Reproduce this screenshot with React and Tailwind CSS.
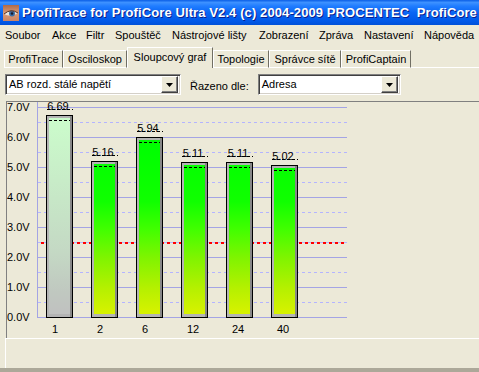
import React from 'react';

const MENU = [
  ['Soubor', 47],
  ['Akce', 34],
  ['Filtr', 29],
  ['Spouštěč', 57],
  ['Nástrojové lišty', 87],
  ['Zobrazení', 60],
  ['Zpráva', 45],
  ['Nastavení', 60],
  ['Nápověda', 50],
];

const TABS = [
  ['ProfiTrace', 59],
  ['Osciloskop', 64],
  ['Sloupcový graf', 86],
  ['Topologie', 56],
  ['Správce sítě', 72],
  ['ProfiCaptain', 70],
];

const BARS = [
  { label: '1', v: 6.69, gray: true },
  { label: '2', v: 5.16 },
  { label: '6', v: 5.94 },
  { label: '12', v: 5.11 },
  { label: '24', v: 5.11 },
  { label: '40', v: 5.02 },
];

const FONT = '"Liberation Sans", Arial, sans-serif';

function EyeIcon() {
  return (
    <svg width="16" height="16" viewBox="0 0 16 16">
      <defs>
        <linearGradient id="skin" x1="0" y1="0" x2="0" y2="1">
          <stop offset="0" stopColor="#b06a48" />
          <stop offset="0.5" stopColor="#d99a78" />
          <stop offset="1" stopColor="#c98466" />
        </linearGradient>
      </defs>
      <rect x="0" y="0" width="16" height="16" fill="url(#skin)" />
      <path d="M1 9 Q8 3 15 8 Q8 13 1 9 Z" fill="#e8e4e0" />
      <circle cx="9" cy="8.5" r="3" fill="#3a6ea8" />
      <circle cx="9" cy="8.5" r="1.3" fill="#1a1a2a" />
      <path d="M1 9 Q8 3 15 8" fill="none" stroke="#5a3020" strokeWidth="1" />
    </svg>
  );
}

function DropButton() {
  return (
    <div className="w-[17px] h-[17px] bg-[#ece9d8] border border-t-white border-l-white border-b-[#404040] border-r-[#404040] shadow-[inset_-1px_-1px_0_#808080] flex items-center justify-center">
      <svg width="7" height="4" viewBox="0 0 7 4">
        <path d="M0 0 H7 L3.5 4 Z" fill="#000" />
      </svg>
    </div>
  );
}

function Combo({ width, text }) {
  return (
    <div
      className="h-[21px] bg-white border border-t-[#808080] border-l-[#808080] border-b-white border-r-white shadow-[inset_1px_1px_0_#404040,inset_-1px_-1px_0_#d4d0c8] flex items-center justify-between pl-[3px] pr-[2px]"
      style={{ width }}
    >
      <span className="text-[11px] text-black leading-none">{text}</span>
      <DropButton />
    </div>
  );
}

function Chart() {
  const yFor = (v) => 317 - v * 30;
  const solid = [0, 1, 2, 3, 4, 5, 6, 7];
  const dashed = [0.5, 1.5, 2.5, 3.5, 4.5, 5.5, 6.5];
  return (
    <svg width="472" height="236" viewBox="7 102 472 236" style={{ fontFamily: FONT }}>
      <defs>
        <linearGradient id="green" gradientUnits="userSpaceOnUse" x1="0" y1="107" x2="0" y2="317">
          <stop offset="0" stopColor="#00f000" />
          <stop offset="0.2" stopColor="#00ff00" />
          <stop offset="0.45" stopColor="#10ff00" />
          <stop offset="0.58" stopColor="#40ff00" />
          <stop offset="0.72" stopColor="#80f400" />
          <stop offset="0.86" stopColor="#b4f000" />
          <stop offset="1" stopColor="#dcf200" />
        </linearGradient>
        <linearGradient id="grayg" gradientUnits="userSpaceOnUse" x1="0" y1="107" x2="0" y2="317">
          <stop offset="0" stopColor="#ccffcc" />
          <stop offset="0.35" stopColor="#c8ecc8" />
          <stop offset="0.7" stopColor="#c4d8c4" />
          <stop offset="0.88" stopColor="#c0c8c0" />
          <stop offset="1" stopColor="#c0c0c0" />
        </linearGradient>
      </defs>

      {solid.map((v) => (
        <g key={v}>
          <line x1="37" x2="347" y1={yFor(v) + 0.5} y2={yFor(v) + 0.5} stroke="#a4a4e4" strokeWidth="1" />
          <text x="7" y={yFor(v) + 4} fontSize="11" fill="#000">
            {v.toFixed(1)}V
          </text>
        </g>
      ))}
      {dashed.map((v) => (
        <line
          key={v}
          x1="38"
          x2="347"
          y1={yFor(v) + 0.5}
          y2={yFor(v) + 0.5}
          stroke="#b4b4ff"
          strokeWidth="1"
          strokeDasharray="3 3"
        />
      ))}
      <line x1="37.5" x2="37.5" y1="102" y2="317.5" stroke="#a4a4e4" strokeWidth="1" />
      <line x1="41" x2="345" y1="243" y2="243" stroke="#ff0000" strokeWidth="2" strokeDasharray="3 3" />

      {BARS.map((b, i) => {
        const x0 = 46 + 45 * i;
        const top = Math.round(315.5 - b.v * 30);
        return (
          <g key={b.label}>
            <rect x={x0} y={top} width="27" height={318 - top} fill="#000" />
            <rect x={x0 + 1} y={top + 1} width="25" height={316 - top} fill="#b4b4b4" />
            <rect x={x0 + 24} y={top + 1} width="2" height={316 - top} fill="#888888" />
            <rect x={x0 + 3} y={top + 3} width="21" height={311 - top} fill={b.gray ? 'url(#grayg)' : 'url(#green)'} />
            <line
              x1={x0 + 3}
              x2={x0 + 24}
              y1={top + 5.5}
              y2={top + 5.5}
              stroke="#000"
              strokeWidth="1"
              strokeDasharray="3 2"
            />
            <line
              x1={x0 + 1}
              x2={x0 + 27}
              y1={top - 5.5}
              y2={top - 5.5}
              stroke="#000"
              strokeWidth="1"
              strokeDasharray="3 2"
            />
            <text x={x0 + 12} y={top - 5} fontSize="11" textAnchor="middle" fill="#000">
              {b.v.toFixed(2)}
            </text>
            <text x={x0 + 6} y="333" fontSize="11" fill="#000">
              {b.label}
            </text>
          </g>
        );
      })}
    </svg>
  );
}

export default function App() {
  return (
    <div className="w-[479px] h-[372px] overflow-hidden bg-[#ece9d8] flex flex-col font-['Liberation_Sans',Arial,sans-serif] text-black">
      {/* title bar */}
      <div className="h-[25px] shrink-0 flex items-center pl-[3px] bg-[linear-gradient(to_bottom,#0a5ee6_0%,#3d91ff_10%,#1f7cff_25%,#0a66f4_50%,#0058e8_85%,#0050d8_100%)]">
        <EyeIcon />
        <span className="ml-[3px] text-white font-bold text-[13px] whitespace-pre tracking-[0.1px] [text-shadow:1px_1px_0_#0a1e8c]">
          ProfiTrace for ProfiCore Ultra V2.4 (c) 2004-2009 PROCENTEC  ProfiCore
        </span>
      </div>

      {/* menu */}
      <div className="h-[21px] shrink-0 flex items-center pl-[5px] text-[11px]">
        {MENU.map(([name, w]) => (
          <span key={name} style={{ width: w }} className="shrink-0 whitespace-nowrap">
            {name}
          </span>
        ))}
      </div>

      {/* tabs */}
      <div className="h-[22px] shrink-0 flex items-end pl-[4px] text-[11px]">
        {TABS.map(([name, w], i) =>
          i === 2 ? (
            <div
              key={name}
              style={{ width: w }}
              className="h-[21px] shrink-0 flex items-center justify-center pb-[2px] border-t border-l border-white border-r border-r-[#716f64] bg-[#ece9d8]"
            >
              {name}
            </div>
          ) : (
            <div
              key={name}
              style={{ width: w }}
              className="h-[18px] shrink-0 flex items-center justify-center border-t border-l border-b border-white border-r border-r-[#716f64]"
            >
              {name}
            </div>
          )
        )}
        <div className="flex-1 h-px bg-white" />
      </div>

      {/* toolbar */}
      <div className="h-[33px] shrink-0 flex items-start pt-[6px] pl-[5px]">
        <Combo width={176} text="AB rozd. stálé napětí" />
        <span className="ml-[9px] mt-[4px] text-[11px]">Řazeno dle:</span>
        <div className="ml-[9px]">
          <Combo width={143} text="Adresa" />
        </div>
      </div>

      {/* chart */}
      <div className="h-[237px] shrink-0 ml-[6px] border-t border-l border-[#808080] overflow-hidden">
        <Chart />
      </div>

      {/* status */}
      <div className="h-[30px] shrink-0 ml-[5px] border-t border-l border-white" />
      <div className="h-[4px] shrink-0 bg-[#aca899]" />
    </div>
  );
}
